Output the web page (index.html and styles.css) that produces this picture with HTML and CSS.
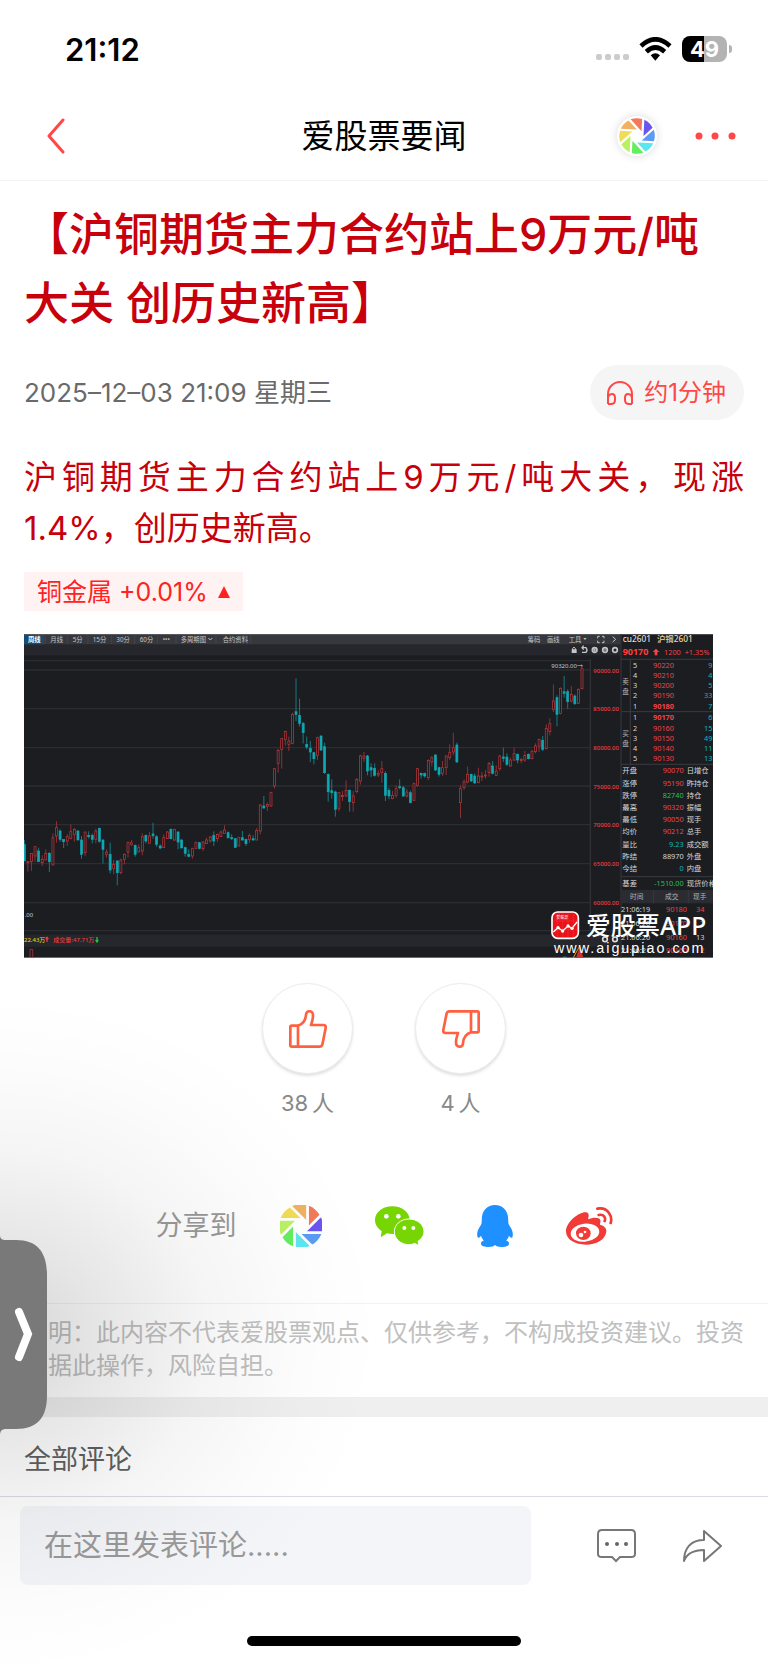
FILE: index.html
```
<!DOCTYPE html>
<html lang="zh-CN">
<head>
  <meta charset="UTF-8">
  <title>爱股票要闻</title>
  <meta name="viewport" content="width=device-width, initial-scale=1">
  <link rel="stylesheet" href="styles.css">
</head>
<body>

  <!-- Shared icon shapes -->
  <svg class="defs" width="0" height="0" aria-hidden="true">
    <defs>
      <path id="blade" d="M6 5.200L20 -8.800A21.500 21.500 0 0 1 21 5.200Z"/>
      <g id="wheel">
        <use href="#blade" fill="#6a55ee"/>
        <use href="#blade" fill="#5b9bf3" transform="rotate(45)"/>
        <use href="#blade" fill="#5ce6f0" transform="rotate(90)"/>
        <use href="#blade" fill="#62ee5e" transform="rotate(135)"/>
        <use href="#blade" fill="#baf164" transform="rotate(180)"/>
        <use href="#blade" fill="#f0dc57" transform="rotate(225)"/>
        <use href="#blade" fill="#f0b160" transform="rotate(270)"/>
        <use href="#blade" fill="#f27a5b" transform="rotate(315)"/>
      </g>
      <path id="thumb" d="M27 47C42 42 50 30 51 14C52 0 72 0 72 17C72 30 68 38 66 45H103C109 45 111 49 110 54L100 104Q98 110 92 110H8Q4 110 4 106V51Q4 47 8 47H27V110"/>
    </defs>
  </svg>

  <div class="status-bar">
    <span class="time">21:12</span>
    <div class="status-icons">
      <span class="signal"><i></i><i></i><i></i><i></i></span>
      <svg class="wifi" viewBox="0 0 99 72" aria-hidden="true">
        <g fill="none" stroke="#000" stroke-width="14">
          <path d="M6 27Q49 -13 93 27"/>
          <path d="M22 44Q49 19 77 44"/>
        </g>
        <path d="M35 55Q49 43 63 55L49 71Z"/>
      </svg>
      <span class="battery"><b>49</b></span>
    </div>
  </div>

  <header class="nav-bar">
    <button class="icon-btn back" aria-label="返回">
      <svg width="20" height="36" viewBox="0 0 20 36"><path d="M17 2L3 18L17 34" fill="none" stroke="#ff4747" stroke-width="3" stroke-linecap="round" stroke-linejoin="round"/></svg>
    </button>
    <div class="nav-title">爱股票要闻</div>
    <div class="nav-actions">
      <button class="icon-btn wheel-btn" aria-label="朋友圈">
        <svg width="36" height="36" viewBox="-22 -22 44 44"><use href="#wheel" transform="rotate(-42)"/></svg>
      </button>
      <button class="icon-btn" aria-label="更多">
        <svg width="42" height="8" viewBox="0 0 42 8" fill="#ff4747"><circle cx="5" cy="4" r="3.500"/><circle cx="21" cy="4" r="3.500"/><circle cx="38" cy="4" r="3.500"/></svg>
      </button>
    </div>
  </header>

  <main>
    <article class="article">
      <h1>【沪铜期货主力合约站上9万元/吨大关 创历史新高】</h1>

      <div class="meta">
        <time datetime="2025-12-03T21:09">2025–12–03 21:09 星期三</time>
        <button class="listen">
          <svg width="28" height="26" viewBox="0 0 28 26" fill="none" stroke="#ff4747" stroke-width="2" aria-hidden="true">
            <path d="M2 24V14A12 12 0 0 1 26 14V24"/>
            <path d="M2 24H5Q9 24 9 20V18Q9 14 6 14Q2 14 2 19M26 24H23Q19 24 19 20V18Q19 14 22 14Q26 14 26 19"/>
          </svg>
          约1分钟
        </button>
      </div>

      <p class="content">沪铜期货主力合约站上9万元/吨大关，现涨1.4%，创历史新高。</p>

      <a class="stock-tag" href="#">铜金属 +0.01% <span class="up"></span></a>

      <svg class="chart" viewBox="12 14 2067 972" role="img" aria-label="沪铜2601 周线">
        <rect x="12" y="14" width="2067" height="972" fill="#1c1d21"/>
        <rect x="12" y="14" width="1791" height="32" fill="#36383d"/>
        <rect x="12" y="46" width="1791" height="32" fill="#26272c"/>
        <rect x="12" y="916" width="1791" height="36" fill="#26272c"/>
        <path d="M12 14H2079M12 985H2079" stroke="#77797d" stroke-width="3"/>
        <path d="M12 94H1711M12 122H1711M12 238H1711M12 355H1711M12 470H1711M12 586H1711M12 703H1711M12 820H1711M12 904H1803" stroke="#2b2d32" stroke-width="4"/>
        <path d="M1711 90V904M1803 14V985" stroke="#303238" stroke-width="4"/>

        <!-- Toolbar -->
        <rect x="12" y="17" width="60" height="28" fill="#174b70"/>
        <path d="M75 18V44M142 18V44M204 18V44M274 18V44M344 18V44M412 18V44M468 18V44M588 18V44M692 18V44" stroke="#4a4c51" stroke-width="2"/>
        <g class="tools">
          <text x="24" y="37" class="on">周线</text>
          <text x="91" y="37">月线</text>
          <text x="158" y="37">5分</text>
          <text x="218" y="37">15分</text>
          <text x="289" y="37">30分</text>
          <text x="359" y="37">60分</text>
          <text x="428" y="37">•••</text>
          <text x="482" y="37">多周期图</text>
          <text x="608" y="37">合约资料</text>
          <text x="1523" y="37">筹码</text>
          <text x="1581" y="37">画线</text>
          <text x="1646" y="37">工具</text>
        </g>
        <g fill="none" stroke="#c3c4c8" stroke-width="3">
          <path d="M565 26L571 32L577 26M1733 27V21H1739M1746 21H1752V27M1733 34V40H1739M1746 40H1752V34M1778 22L1787 30L1778 38"/>
          <path d="M1658 62V57Q1662 50 1666 57V62"/>
          <path d="M1688 55H1698Q1704 62 1698 69H1686M1691 49L1686 55L1691 61" stroke-width="4"/>
          <g stroke-width="5">
            <circle cx="1724" cy="62" r="7"/><circle cx="1755" cy="62" r="7"/><circle cx="1785" cy="62" r="7"/>
          </g>
          <path d="M1719 62H1729M1724 57V67M1750 62H1760"/>
        </g>
        <path d="M1655 60H1670V71H1655ZM1690 26H1700L1695 32Z" fill="#c3c4c8"/>

        <g id="candles"></g>

        <text class="note" x="1594" y="115">90320.00→</text>
        <text class="note" x="14" y="864">.00</text>
        <g class="axis">
          <text x="1720" y="130">90000.00</text>
          <text x="1720" y="246">85000.00</text>
          <text x="1720" y="363">80000.00</text>
          <text x="1720" y="478">75000.00</text>
          <text x="1720" y="594">70000.00</text>
          <text x="1720" y="710">65000.00</text>
          <text x="1720" y="827">60000.00</text>
        </g>
        <text class="volume" x="12" y="938" fill="#e0d020">22.43万</text>
        <text class="volume" x="100" y="938" fill="#ee3b3b">成交量:47.71万</text>
        <path d="M81 938V925M77 929L81 924L85 929" stroke="#ee3b3b" stroke-width="4" fill="none"/>
        <path d="M231 923V937M227 932L231 938L235 932" stroke="#22c24d" stroke-width="4" fill="none"/>
        <path d="M30 985V960H38V985" fill="none" stroke="#c23b3f" stroke-width="2"/>
        <path d="M1668 985L1680 950L1690 985Z" fill="#c8322f"/>
        <path d="M1660 985L1680 948" stroke="#e0a020" stroke-width="3"/>
        <path d="M1628 985H1640" stroke="#11aab4" stroke-width="6"/>

        <!-- Quote panel -->
        <g transform="translate(1560 0)">
          <path d="M243 90H519M243 247H519M243 405H519M243 742H519M271 90V405" stroke="#3a3c41" stroke-width="3"/>
          <rect x="243" y="782" width="276" height="40" fill="#2a2c31"/>
          <path d="M341 782V822M445 782V822" stroke="#3f4146" stroke-width="2"/>
          <text x="248" y="38" class="code">cu2601</text>
          <text x="351" y="38" class="code name">沪铜2601</text>
          <text x="248" y="77" class="price">90170</text>
          <path d="M348 58L358 68H352V78H344V68H338Z" fill="#ff4040"/>
          <text x="372" y="76" class="red">1200</text>
          <text x="434" y="76" class="red">+1.35%</text>
          <g class="label">
            <text x="247" y="164">卖</text><text x="247" y="194">盘</text>
            <text x="247" y="319">买</text><text x="247" y="349">盘</text>
          </g>
          <g id="orders"></g>
          <g id="quotes"></g>
          <g class="label">
            <text x="270" y="809">时间</text><text x="375" y="809">成交</text><text x="459" y="809">现手</text>
          </g>
          <g id="trades"></g>
        </g>

        <!-- Watermark -->
        <g transform="translate(900 0)">
          <rect x="696" y="848" width="79" height="79" rx="17" fill="#ea1218" stroke="#fff" stroke-width="5"/>
          <path d="M712 852V923M728 852V923M744 852V923M760 852V923M700 875H771M700 900H771" stroke="#f44" stroke-width="1"/>
          <text x="709" y="868" class="logo-name">爱股票</text>
          <path d="M700 908L714 895L728 905L744 890L756 897L771 878" fill="none" stroke="#fff" stroke-width="4"/>
          <g fill="#fff"><circle cx="714" cy="895" r="5"/><circle cx="728" cy="905" r="5"/><circle cx="744" cy="890" r="5"/><circle cx="756" cy="897" r="5"/></g>
          <text x="798" y="916" class="brand">爱股票APP</text>
          <text x="702" y="970" class="site">www.aigupiao.com</text>
          <g fill="none" stroke="#ddd" stroke-width="5"><circle cx="855" cy="930" r="7"/><circle cx="885" cy="930" r="7"/></g>
        </g>
      </svg>

      <div class="votes">
        <div class="vote">
          <button aria-label="赞"><svg width="38" height="38" viewBox="0 0 114 114"><use href="#thumb"/></svg></button>
          <span>38&thinsp;人</span>
        </div>
        <div class="vote">
          <button aria-label="踩"><svg width="38" height="38" viewBox="0 0 114 114"><use href="#thumb" transform="rotate(180 57 57)"/></svg></button>
          <span>4&thinsp;人</span>
        </div>
      </div>

      <div class="share">
        <span>分享到</span>
        <div class="share-list">
          <a href="#" aria-label="朋友圈"><svg width="42" height="42" viewBox="-21 -21 42 42"><use href="#wheel"/></svg></a>
          <a href="#" aria-label="微信">
            <svg width="49" height="40" viewBox="0 0 147 120">
              <path d="M52 1C23 1 0 19 0 42C0 56 8 67 20 75L17 94L36 82Q44 84 56 84C83 84 104 65 104 42C104 19 81 1 52 1Z" fill="#76d502"/>
              <path d="M102 39C77 39 58 56 58 77C58 99 78 116 102 116Q112 116 119 112L132 119L129 106C140 98 147 89 147 77C147 56 127 39 102 39Z" fill="#76d502" stroke="#fff" stroke-width="3"/>
              <g fill="#fff"><circle cx="34" cy="31" r="7"/><circle cx="70" cy="31" r="7"/><circle cx="88" cy="66" r="6"/><circle cx="115" cy="66" r="6"/></g>
            </svg>
          </a>
          <a href="#" aria-label="QQ">
            <svg width="36" height="42" viewBox="0 0 106 124">
              <path fill="#1e90ff" d="M53 0C30 0 14 17 14 42C14 51 14 54 11 60C1 74 -2 86 2 96C5 99 8 95 12 91C13 97 16 101 20 105C12 108 11 112 12 116C13 122 22 124 34 124C44 124 50 121 53 118C56 121 62 124 72 124C84 124 93 122 94 116C95 112 94 108 86 105C90 101 93 97 94 91C98 95 101 99 104 96C108 86 105 74 95 60C92 54 92 51 92 42C92 17 76 0 53 0Z"/>
            </svg>
          </a>
          <a href="#" aria-label="微博">
            <svg width="47" height="38" viewBox="0 0 141 114">
              <path fill="#f23a36" d="M0 73C0 45 40 14 60 16C70 17 69 27 66 37C80 31 100 30 103 39C105 45 101 49 102 53C115 56 122 64 121 74C118 98 90 113 60 113C28 113 0 98 0 73Z"/>
              <ellipse cx="57" cy="77" rx="43" ry="27" fill="#fff" transform="rotate(-7 57 77)"/>
              <ellipse cx="52" cy="79" rx="22" ry="20" fill="#f23a36"/>
              <circle cx="45" cy="84" r="7" fill="#fff"/><circle cx="57" cy="75" r="4" fill="#fff"/>
              <path d="M94 5Q118 1 129 18Q139 32 134 48M98 24Q109 21 115 29Q119 35 116 42" fill="none" stroke="#f23a36" stroke-width="8" stroke-linecap="round"/>
            </svg>
          </a>
        </div>
      </div>
    </article>

    <p class="disclaimer">声明：此内容不代表爱股票观点、仅供参考，不构成投资建议。投资者据此操作，风险自担。</p>

    <h2 class="comments-title">全部评论</h2>
  </main>

  <footer class="bottom-bar">
    <div class="comment-row">
      <input type="text" placeholder="在这里发表评论....." aria-label="发表评论">
      <div class="comment-actions">
        <button class="icon-btn" aria-label="评论">
          <svg width="39" height="34" viewBox="0 0 39 34" fill="none" stroke="#777" stroke-width="2">
            <path d="M5 1H34Q38 1 38 5V25Q38 28 34 28H23L19 32L15 28H5Q1 28 1 25V5Q1 1 5 1Z"/>
            <g fill="#666" stroke="none"><circle cx="10" cy="15" r="2"/><circle cx="20" cy="15" r="2"/><circle cx="29" cy="15" r="2"/></g>
          </svg>
        </button>
        <button class="icon-btn" aria-label="分享">
          <svg width="39" height="34" viewBox="0 0 39 34" fill="none" stroke="#777" stroke-width="2" stroke-linejoin="round">
            <path d="M21 2L38 17L21 32V21C11 21 4 24 1 32C1 19 8 11 21 11Z"/>
          </svg>
        </button>
      </div>
    </div>
    <div class="home-indicator"></div>
  </footer>

  <!-- Floating side handle -->
  <div class="side-shade"></div>
  <button class="side-handle" aria-label="展开">
    <svg width="48" height="200" viewBox="0 0 48 200">
      <path d="M0 0C0 4 2 5 6 5H16C38 5 47 18 47 40V160C47 182 38 194 16 194H6C2 194 0 196 0 200Z" fill="#797979"/>
      <path d="M19 77L28 99L19 122" fill="none" stroke="#fff" stroke-width="8" stroke-linecap="round"/>
    </svg>
  </button>

  <script src="chart.js"></script>
</body>
</html>
```
FILE: styles.css
```
:root {
  --red: #ff4747;
  --title-red: #c7000b;
  --line: #f2f2f2;
}

* {
  box-sizing: border-box;
}

body {
  margin: 0;
  position: relative;
  font-family: Inter, "Noto Sans CJK SC", sans-serif;
  background: #fff;
  color: #000;
  overflow-x: hidden;
}

button {
  font-family: inherit;
  border: none;
  padding: 0;
  cursor: pointer;
}

svg {
  display: block;
}

.defs {
  position: absolute;
}

.icon-btn {
  background: none;
}

/* Status bar */
.status-bar {
  height: 92px;
  padding: 6px 36px 0 65px;
  display: flex;
  align-items: center;
  justify-content: space-between;
}

.time {
  font-size: 31px;
  font-weight: 600;
}

.status-icons {
  display: flex;
  align-items: center;
  gap: 10px;
}

.signal {
  display: flex;
  gap: 3px;
  padding-top: 16px;
}

.signal i {
  width: 6px;
  height: 6px;
  border-radius: 2px;
  background: #ccc;
}

.wifi {
  width: 33px;
  height: 24px;
}

.battery {
  position: relative;
  width: 45px;
  height: 26px;
  margin-right: 5px;
  border-radius: 8px;
  background: linear-gradient(90deg, #000 49%, #b3b3b3 49%);
  color: #fff;
  font-size: 22px;
  line-height: 26px;
  text-align: center;
}

.battery::after {
  content: "";
  position: absolute;
  right: -5px;
  top: 9px;
  width: 3px;
  height: 8px;
  border-radius: 0 3px 3px 0;
  background: #b3b3b3;
}

/* Nav bar */
.nav-bar {
  display: grid;
  grid-template-columns: 1fr auto 1fr;
  align-items: center;
  height: 89px;
  padding: 0 32px;
  border-bottom: 1px solid var(--line);
}

.back {
  justify-self: start;
  padding-left: 14px;
}

.nav-title {
  font-size: 33px;
  line-height: 48px;
}

.nav-actions {
  display: flex;
  align-items: center;
  justify-content: flex-end;
  gap: 37px;
}

.wheel-btn {
  padding: 2px;
  border-radius: 50%;
  background: #fff;
  box-shadow: 0 0 8px rgba(0,0,0,0.15);
}

/* Article */
.article {
  padding: 19px 24px 56px;
}

h1 {
  margin: 0;
  padding-right: 24px;
  font-size: 45px;
  font-weight: 500;
  line-height: 69px;
  color: var(--title-red);
}

.meta {
  display: flex;
  align-items: center;
  justify-content: space-between;
  margin-top: 27px;
  font-size: 26px;
  line-height: 32px;
  color: #6a6a6a;
}

.listen {
  display: flex;
  align-items: center;
  gap: 10px;
  height: 55px;
  padding: 0 18px 0 16px;
  border-radius: 28px;
  background: #f5f5f6;
  color: var(--red);
  font-size: 24px;
  line-height: 32px;
}

.content {
  margin: 32px 0 18px;
  font-size: 33px;
  line-height: 51px;
  color: var(--title-red);
  text-align: justify;
}

.stock-tag {
  display: flex;
  align-items: center;
  gap: 10px;
  width: fit-content;
  height: 39px;
  padding: 0 13px;
  background: #fff2f2;
  color: #ff2222;
  font-size: 25px;
  line-height: 32px;
  text-decoration: none;
}

.up {
  border: 6px solid transparent;
  border-top: none;
  border-bottom: 12px solid #ff2222;
}

/* Chart picture */
.chart {
  width: 100%;
  max-width: 689px;
  margin-top: 23px;
  font-family: "Noto Sans", "Noto Sans CJK SC", sans-serif;
}

.tools text {
  font-size: 19px;
  fill: #c6c7ca;
}

.tools .on {
  fill: #fff;
  font-weight: 700;
}

.note {
  font-size: 18px;
  fill: #c6c7ca;
}

.axis text {
  font-size: 18px;
  font-weight: 500;
  fill: #ea3c40;
}

.volume {
  font-size: 18px;
  font-weight: 500;
}

.code {
  font-size: 25px;
  font-weight: 500;
  fill: #ddd;
}

.name {
  fill: #f3d9a0;
}

.price {
  font-size: 27px;
  font-weight: 700;
  fill: #ff4040;
}

.red { fill: #f04247; font-size: 22px; }
.cyan { fill: #12b4c0; font-size: 22px; }
.green { fill: #22c24d; font-size: 22px; }
.white { fill: #d5d6d8; font-size: 22px; }
.bold { font-weight: 700; }

.label text {
  font-size: 20px;
  fill: #b2b3b7;
}

.end {
  text-anchor: end;
}

.logo-name {
  font-size: 12px;
  fill: #fff;
}

.brand {
  font-size: 74px;
  font-weight: 500;
  fill: #fff;
}

.site {
  font-family: "Liberation Sans", sans-serif;
  font-size: 43px;
  letter-spacing: 6px;
  fill: #fff;
}

/* Votes */
.votes {
  display: flex;
  justify-content: center;
  gap: 62px;
  margin-top: 25px;
}

.vote {
  display: flex;
  flex-direction: column;
  align-items: center;
  gap: 14px;
  font-size: 22px;
  line-height: 30px;
  color: #888;
}

.vote button {
  display: grid;
  place-items: center;
  width: 91px;
  height: 91px;
  border: 1px solid #ececec;
  border-radius: 50%;
  background: #fff;
  box-shadow: 0 2px 3px rgba(0,0,0,0.12);
}

.vote svg {
  fill: none;
  stroke: #ff6140;
  stroke-width: 8;
  stroke-linejoin: round;
}

/* Share */
.share {
  display: flex;
  align-items: center;
  justify-content: center;
  gap: 43px;
  margin-top: 87px;
  font-size: 27px;
  line-height: 36px;
  color: #999;
}

.share-list {
  display: flex;
  align-items: center;
  gap: 53px;
}

.disclaimer {
  margin: 0;
  padding: 12px 24px 15px;
  border-top: 1px solid var(--line);
  border-bottom: 20px solid #efefef;
  font-size: 24px;
  line-height: 33px;
  color: #c0c0c0;
}

.comments-title {
  margin: 0;
  padding: 23px 24px 16px;
  font-size: 27px;
  font-weight: 400;
  line-height: 40px;
  color: #606060;
}

/* Bottom bar */
.bottom-bar {
  padding: 9px 20px 17px;
  border-top: 1px solid #dcdce6;
}

.comment-row {
  display: flex;
  align-items: center;
  justify-content: space-between;
}

.comment-row input {
  flex: 0 1 511px;
  min-width: 0;
  height: 79px;
  padding: 0 24px;
  border: none;
  border-radius: 8px;
  background: #f4f5f8;
  font-family: inherit;
  font-size: 29px;
  outline: none;
}

.comment-row input::placeholder {
  color: #999;
}

.comment-actions {
  display: flex;
  gap: 47px;
  padding-right: 26px;
}

.home-indicator {
  width: 274px;
  height: 10px;
  margin: 51px auto 0;
  border-radius: 5px;
  background: #000;
}

/* Side handle */
.side-shade {
  position: absolute;
  left: 0;
  bottom: 0;
  width: 400px;
  height: 690px;
  background: radial-gradient(ellipse 380px 340px at 0 362px, rgba(0,0,0,0.17), rgba(0,0,0,0.10) 25%, rgba(0,0,0,0.04) 55%, rgba(0,0,0,0.01) 80%, transparent);
  pointer-events: none;
}

.side-handle {
  position: absolute;
  left: 0;
  bottom: 228px;
  background: none;
}
```
FILE: chart.js
```
const SVG_NS = "http://www.w3.org/2000/svg";

// direction (1 = up), body top, body bottom, high, low
const candles = [
  [0,645,695,632,695],[1,697,700,697,727],[1,672,697,672,725],[1,652,680,652,697],[0,665,697,655,697],
  [1,690,700,678,710],[1,672,692,660,692],[0,672,697,668,728],[1,625,707,612,707],[1,595,620,576,640],
  [0,605,630,600,637],[0,630,637,630,656],[1,622,635,615,650],[1,607,627,586,630],[1,600,615,596,637],
  [0,605,632,603,632],[0,632,675,620,688],[1,608,670,608,680],[0,618,622,606,628],[0,618,630,612,642],
  [1,605,630,598,642],[0,597,636,595,640],[0,632,660,630,703],[1,668,675,660,685],[0,675,722,640,732],
  [1,705,717,692,735],[0,695,730,692,768],[1,692,730,688,735],[1,675,690,672,705],[1,640,668,636,685],
  [1,640,645,632,650],[0,648,675,645,682],[1,655,668,645,668],[1,622,665,612,678],[0,618,635,615,642],
  [1,620,642,608,642],[0,614,619,580,628],[0,622,645,618,652],[0,650,656,645,660],[1,625,655,615,655],
  [1,608,628,605,628],[0,600,628,597,630],[1,600,632,598,635],[0,608,638,606,660],[0,632,656,630,656],
  [0,655,672,652,682],[0,675,681,660,684],[1,658,680,655,688],[1,640,657,636,657],[0,640,657,638,660],
  [1,638,658,635,665],[1,632,643,625,643],[1,623,635,620,640],[0,618,635,606,650],[1,615,628,612,638],
  [1,608,622,604,622],[1,602,612,588,612],[0,610,625,606,628],[0,625,628,615,632],[0,628,654,626,656],
  [1,625,650,622,650],[0,625,632,605,634],[0,630,643,628,650],[1,618,630,612,640],[0,628,632,618,634],
  [1,603,632,596,632],[1,527,605,525,615],[0,530,536,500,538],[1,525,531,520,545],[1,490,530,487,532],
  [1,418,470,416,478],[1,363,402,358,430],[1,328,360,326,418],[1,306,330,304,348],[1,335,345,322,365],
  [1,255,342,250,345],[0,247,255,147,275],[0,258,282,208,292],[0,282,310,278,342],[0,345,353,322,360],
  [0,357,368,335,398],[0,370,388,368,405],[1,325,378,322,392],[0,320,362,318,365],[0,352,430,340,434],
  [0,435,487,432,517],[0,484,490,450,508],[0,488,540,484,562],[1,490,537,488,545],[1,498,502,485,515],
  [1,483,500,453,502],[0,483,517,480,547],[1,500,520,485,547],[1,450,487,446,492],[1,380,455,376,466],
  [1,380,387,368,398],[0,380,425,377,438],[0,415,422,402,443],[0,417,438,402,442],[1,432,437,422,443],
  [1,418,430,395,460],[0,432,498,426,515],[0,483,500,475,510],[1,498,508,484,510],[1,478,498,468,505],
  [0,472,475,450,480],[0,475,500,470,503],[1,488,500,478,505],[0,490,520,484,522],[1,463,513,460,515],
  [1,418,468,416,472],[0,432,437,430,448],[0,432,440,430,445],[1,393,445,390,452],[1,385,398,380,412],
  [0,377,422,375,425],[0,415,435,412,442],[1,415,432,395,440],[1,380,415,378,437],[1,370,385,345,392],
  [1,355,368,310,378],[0,347,398,340,400],[1,478,520,468,566],[1,458,475,450,482],[1,435,458,412,462],
  [0,435,455,433,458],[0,440,461,432,463],[1,440,460,415,462],[1,440,443,428,455],[1,437,440,422,448],
  [1,402,430,398,442],[0,410,432,395,435],[1,425,438,408,440],[1,380,418,377,425],[0,383,387,355,398],
  [0,383,405,372,410],[1,392,410,385,412],[1,373,392,355,395],[0,375,392,372,402],[1,390,394,385,402],
  [1,378,392,365,398],[0,375,388,372,390],[1,367,388,362,390],[1,350,367,342,372],[1,330,350,328,368],
  [0,333,360,320,365],[1,297,358,285,360],[1,283,307,267,318],[1,215,240,165,248],[0,205,255,198,291],
  [1,177,252,174,255],[0,187,192,140,205],[0,187,217,180,238],[1,195,215,170,220],[0,200,223,195,227],
  [1,180,222,177,224],[1,118,178,114,180]
];

const orders = [
  [5, 115, "90220", 9], [4, 145, "90210", 4], [3, 176, "90200", 5], [2, 207, "90190", 33], [1, 238, "90180", 7],
  [1, 273, "90170", 6], [2, 304, "90160", 15], [3, 334, "90150", 49], [4, 364, "90140", 11], [5, 395, "90130", 13]
];

const quotes = [
  ["开盘", "90070", "red", "日增仓", 432], ["涨停", "95190", "red", "昨持仓", 469],
  ["跌停", "82740", "green", "持仓", 505], ["最高", "90320", "red", "振幅", 542],
  ["最低", "90050", "red", "现手", 579], ["均价", "90212", "red", "总手", 615],
  ["量比", "9.23", "cyan", "成交额", 652], ["昨结", "88970", "white", "外盘", 689],
  ["今结", "0", "cyan", "内盘", 726], ["基差", "-1510.00", "green", "现货价格", 770]
];

const trades = [
  ["21:06:19", "90180", "34", "red", 849], ["21:06:20", "90170", "7", "green", 890],
  ["21:06:20", "90160", "13", "white", 931], ["21:06:21", "90160", "2", "red", 971]
];

function add(parent, tag, attrs, text) {
  const el = document.createElementNS(SVG_NS, tag);
  for (const key in attrs) el.setAttribute(key, attrs[key]);
  if (text !== undefined) el.textContent = text;
  parent.appendChild(el);
}

function drawCandles() {
  const group = document.getElementById("candles");
  const step = 1673 / (candles.length - 1);
  candles.forEach(([up, top, bottom, high, low], i) => {
    const x = 13 + i * step;
    const color = up ? "#c8393e" : "#10a9b4";
    add(group, "path", { d: `M${x} ${high}V${top}M${x} ${bottom}V${low}`, stroke: color, "stroke-width": 2 });
    add(group, "rect", {
      x: x - 3, y: top, width: 6, height: bottom - top,
      fill: up ? "#1c1d21" : color, stroke: color, "stroke-width": 2
    });
  });
}

function drawPanel() {
  const orderGroup = document.getElementById("orders");
  orders.forEach(([level, y, price, amount]) => {
    const bold = level === 1 ? " bold" : "";
    add(orderGroup, "text", { x: 279, y: y, class: "white" }, level);
    add(orderGroup, "text", { x: 402, y: y, class: "red end" + bold }, price);
    add(orderGroup, "text", { x: 517, y: y, class: "cyan end" }, amount);
  });

  const quoteGroup = document.getElementById("quotes");
  quotes.forEach(([name, value, color, next, y]) => {
    add(quoteGroup, "text", { x: 247, y: y, class: "white" }, name);
    add(quoteGroup, "text", { x: 431, y: y, class: color + " end" }, value);
    add(quoteGroup, "text", { x: 440, y: y, class: "white" }, next);
  });

  const tradeGroup = document.getElementById("trades");
  trades.forEach(([time, price, hand, color, y]) => {
    add(tradeGroup, "text", { x: 243, y: y, class: "white" }, time);
    add(tradeGroup, "text", { x: 441, y: y, class: "red end" }, price);
    add(tradeGroup, "text", { x: 493, y: y, class: color + " end" }, hand);
  });
}

drawCandles();
drawPanel();
```
